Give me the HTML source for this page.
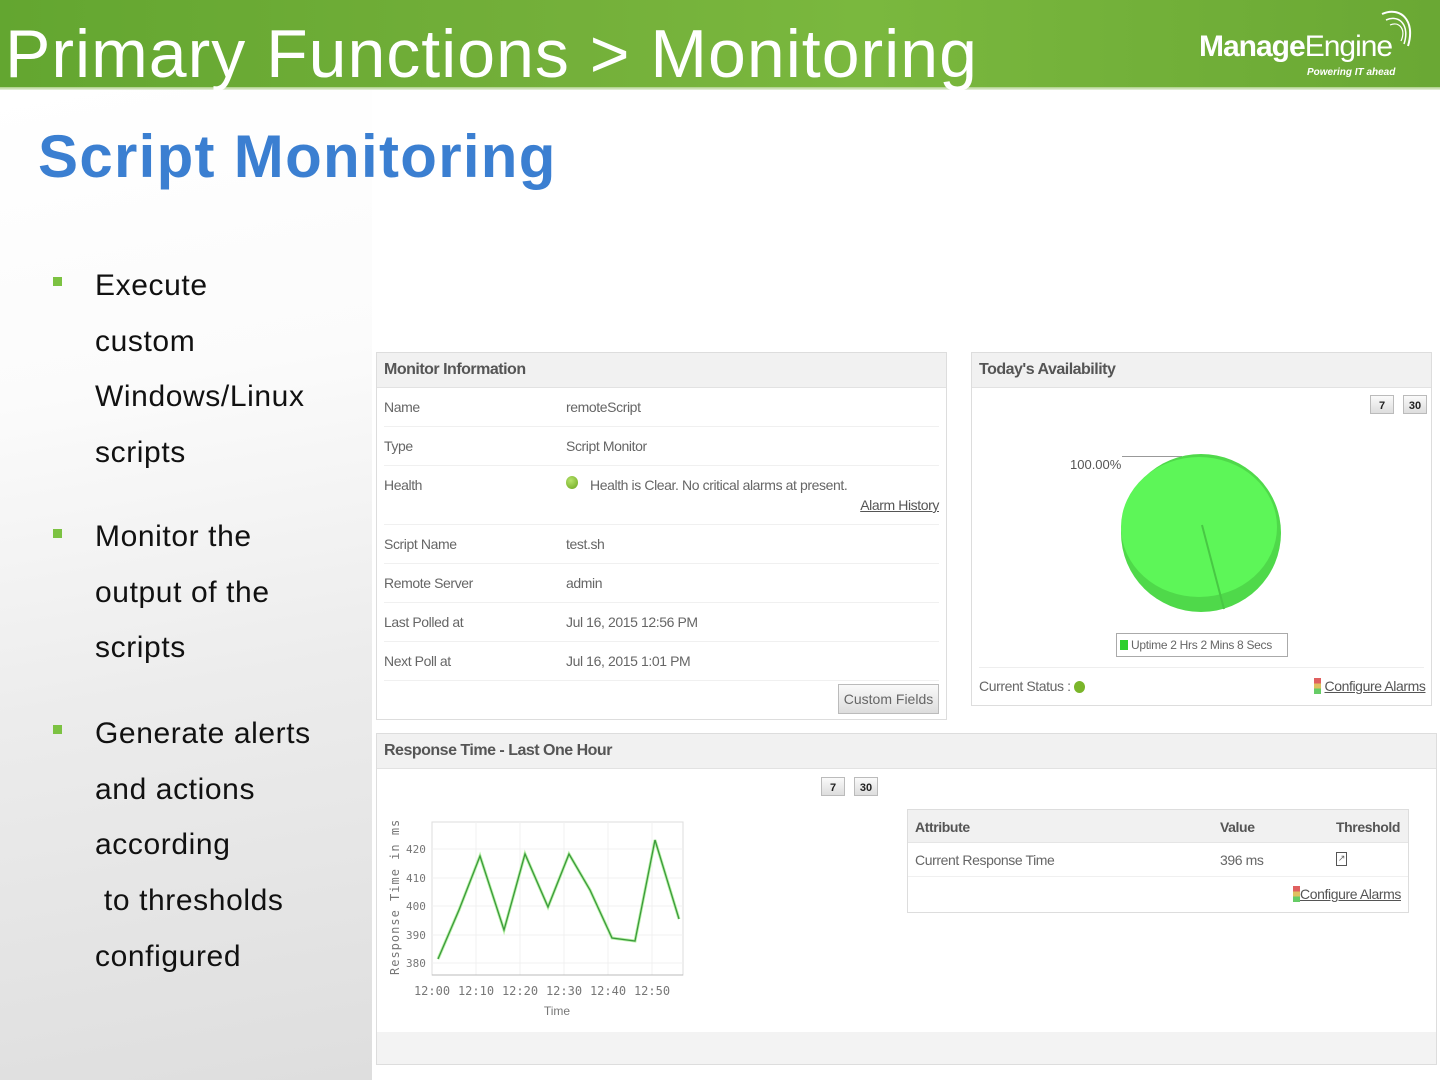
<!DOCTYPE html>
<html><head><meta charset="utf-8"><style>
*{margin:0;padding:0;box-sizing:border-box}
body{width:1440px;height:1080px;position:relative;overflow:hidden;font-family:"Liberation Sans",sans-serif;background:#fff}
.abs{position:absolute}
#hdr{left:0;top:0;width:1440px;height:88px;background:linear-gradient(90deg,#63a630 0%,#74b03a 40%,#7ab83e 60%,#6aa834 100%)}
#hdrline{left:0;top:87px;width:1440px;height:3px;background:linear-gradient(#a9cf83,#e9f2df)}
#left{left:0;top:90px;width:372px;height:990px;background:linear-gradient(170deg,#ffffff 0%,#fbfbfb 30%,#ececec 60%,#dedede 100%)}
.bul{left:53px;width:9px;height:9px;background:#7cc242}
.bt{left:95px;font-size:30px;color:#111;line-height:55.7px;white-space:pre;letter-spacing:0.6px}
.panel{border:1px solid #ddd;background:#fff}
.ph{background:#f1f1f1;height:35px;border-bottom:1px solid #e2e2e2;font-size:16px;color:#555;font-weight:bold;padding:8px 7px;letter-spacing:-0.5px;transform-origin:left}
.row{position:absolute;left:7px;right:7px;height:39px;border-bottom:1px solid #f0f0f0;font-size:14px;color:#666;letter-spacing:-0.4px}
.row span{position:absolute;top:11px}
.btn{border:1px solid #bbb;background:linear-gradient(#fafafa,#ddd);font-size:11px;font-weight:bold;color:#222;text-align:center;line-height:20px}
u{color:#555}
</style></head><body>
<div id="hdr" class="abs"></div>
<div id="hdrline" class="abs"></div>
<div class="abs" style="left:5px;top:14px;font-size:68px;color:#fff;letter-spacing:1px;line-height:80px;white-space:nowrap">Primary Functions &gt; Monitoring</div>
<div class="abs" style="left:1199px;top:30px;font-size:30px;color:#fff;letter-spacing:-1px;white-space:nowrap"><b>Manage</b>Engine</div>
<div class="abs" style="left:1307px;top:67px;font-size:10px;color:#fff;font-style:italic;font-weight:bold">Powering IT ahead</div>
<svg class="abs" style="left:1380px;top:6px" width="40" height="60"><path d="M2 8 C20 0 36 14 28 40" stroke="#fff" stroke-width="2" fill="none"/><path d="M6 14 C20 8 30 20 24 38" stroke="#fff" stroke-width="1.5" fill="none"/><path d="M10 19 C20 15 26 24 21 35" stroke="#fff" stroke-width="1.2" fill="none"/></svg>
<div id="left" class="abs"></div>
<div class="abs" style="left:38px;top:122px;font-size:60px;font-weight:bold;color:#3b7fd1;letter-spacing:1.3px;white-space:nowrap">Script Monitoring</div>

<div class="abs bul" style="top:277px"></div>
<div class="abs bt" style="top:258px">Execute
custom
Windows/Linux
scripts</div>
<div class="abs bul" style="top:529px"></div>
<div class="abs bt" style="top:509px">Monitor the
output of the
scripts</div>
<div class="abs bul" style="top:725px"></div>
<div class="abs bt" style="top:706px">Generate alerts
and actions
according
 to thresholds
configured</div>

<!-- Monitor information -->
<div class="abs panel" style="left:376px;top:352px;width:571px;height:368px">
<div class="ph">Monitor Information</div>
<div class="row" style="top:35px"><span style="left:0">Name</span><span style="left:182px">remoteScript</span></div>
<div class="row" style="top:74px"><span style="left:0">Type</span><span style="left:182px">Script Monitor</span></div>
<div class="row" style="top:113px;height:59px"><span style="left:0">Health</span><span style="left:182px;top:10px;width:12px;height:13px;border-radius:50%;background:radial-gradient(circle at 40% 35%,#b6e36a,#6aa51e)"></span><span style="left:206px">Health is Clear. No critical alarms at present.</span><span style="right:0;top:31px"><u>Alarm History</u></span></div>
<div class="row" style="top:172px"><span style="left:0">Script Name</span><span style="left:182px">test.sh</span></div>
<div class="row" style="top:211px"><span style="left:0">Remote Server</span><span style="left:182px">admin</span></div>
<div class="row" style="top:250px"><span style="left:0">Last Polled at</span><span style="left:182px">Jul 16, 2015 12:56 PM</span></div>
<div class="row" style="top:289px"><span style="left:0">Next Poll at</span><span style="left:182px">Jul 16, 2015 1:01 PM</span></div>
<div class="abs btn" style="left:461px;top:331px;width:101px;height:30px;line-height:28px;font-size:14px;font-weight:normal;color:#666">Custom Fields</div>
</div>

<!-- Availability -->
<div class="abs panel" style="left:971px;top:352px;width:461px;height:354px">
<div class="ph">Today's Availability</div>
<div class="abs btn" style="left:398px;top:42px;width:24px;height:19px">7</div>
<div class="abs btn" style="left:431px;top:42px;width:24px;height:19px">30</div>
<div class="abs" style="left:98px;top:104px;font-size:13px;color:#555">100.00%</div>
<div class="abs" style="left:150px;top:103px;width:60px;height:1px;background:#999"></div>
<svg class="abs" style="left:148px;top:98px" width="164" height="162"><ellipse cx="81" cy="82" rx="80" ry="79" fill="#4fd94a"/><ellipse cx="79" cy="76" rx="78" ry="70" fill="#5df658"/><path d="M82 74 L104 158" stroke="#48c844" stroke-width="2"/></svg>
<div class="abs" style="left:144px;top:280px;width:172px;height:24px;border:1px solid #aaa;font-size:12px;letter-spacing:-0.3px;color:#666;padding:4px 3px;white-space:nowrap;overflow:hidden"><span style="display:inline-block;width:8px;height:10px;background:#2ccf2c;vertical-align:-1px"></span> Uptime 2 Hrs 2 Mins 8 Secs</div>
<div class="abs" style="left:7px;top:314px;right:7px;height:1px;background:#eee"></div>
<div class="abs" style="left:7px;top:325px;font-size:14px;color:#666;letter-spacing:-0.4px">Current Status : <span style="display:inline-block;width:11px;height:12px;border-radius:50%;background:#7ab52a;vertical-align:-2px"></span></div>
<div class="abs" style="left:342px;top:325px;font-size:14px;letter-spacing:-0.4px"><span style="display:inline-block;width:7px;height:16px;background:linear-gradient(#e06060 33%,#e0c060 33% 66%,#6c6 66%);vertical-align:-3px"></span> <u>Configure Alarms</u></div>
</div>

<!-- Response time -->
<div class="abs panel" style="left:376px;top:733px;width:1061px;height:332px">
<div class="ph">Response Time - Last One Hour</div>
<div class="abs btn" style="left:444px;top:43px;width:24px;height:19px">7</div>
<div class="abs btn" style="left:477px;top:43px;width:24px;height:19px">30</div>
<div class="abs" style="left:0;right:0;bottom:0;height:32px;background:#f3f3f3"></div>
<div class="abs" style="left:530px;top:75px;width:502px;height:104px;border:1px solid #ddd">
 <div style="background:#f1f1f1;height:33px;border-bottom:1px solid #e5e5e5;font-size:14px;font-weight:bold;color:#555;position:relative;letter-spacing:-0.4px"><span class="abs" style="left:7px;top:9px">Attribute</span><span class="abs" style="left:312px;top:9px">Value</span><span class="abs" style="left:428px;top:9px">Threshold</span></div>
 <div style="height:34px;border-bottom:1px solid #f0f0f0;position:relative;font-size:14px;color:#666;letter-spacing:-0.4px"><span class="abs" style="left:7px;top:9px">Current Response Time</span><span class="abs" style="left:312px;top:9px">396 ms</span><span class="abs" style="left:428px;top:9px;width:11px;height:14px;border:1px solid #555;font-size:9px;line-height:11px;text-align:center">↗</span></div>
 <div class="abs" style="right:7px;top:76px;font-size:14px;letter-spacing:-0.4px"><span style="display:inline-block;width:7px;height:16px;background:linear-gradient(#e06060 33%,#e0c060 33% 66%,#6c6 66%);vertical-align:-3px"></span><u>Configure Alarms</u></div>
</div>
</div>

<svg class="abs" style="left:380px;top:810px" width="320" height="215" font-family="DejaVu Sans Mono, Liberation Mono, monospace" font-size="11" fill="#777">
<g transform="translate(-380,-810)">
<rect x="432" y="822" width="251" height="153" fill="none" stroke="#ddd"/>
<g stroke="#f0f0f0"><line x1="476" y1="822" x2="476" y2="975"/><line x1="520" y1="822" x2="520" y2="975"/><line x1="564" y1="822" x2="564" y2="975"/><line x1="608" y1="822" x2="608" y2="975"/><line x1="652" y1="822" x2="652" y2="975"/><line x1="432" y1="849" x2="683" y2="849"/><line x1="432" y1="878" x2="683" y2="878"/><line x1="432" y1="906" x2="683" y2="906"/><line x1="432" y1="935" x2="683" y2="935"/><line x1="432" y1="963" x2="683" y2="963"/></g>
<line x1="432" y1="975" x2="683" y2="975" stroke="#bbb"/>
<polyline points="438,959 459,910 480,856 504,930 525,854 548,907 569,854 590,890 612,938 635,941 655,840 679,919" fill="none" stroke="#b8f0a8" stroke-width="3"/>
<polyline points="438,959 459,910 480,856 504,930 525,854 548,907 569,854 590,890 612,938 635,941 655,840 679,919" fill="none" stroke="#3a9a3a" stroke-width="1.3"/>
<text x="406" y="853">420</text><text x="406" y="882">410</text><text x="406" y="910">400</text><text x="406" y="939">390</text><text x="406" y="967">380</text>
<g text-anchor="middle" font-size="12"><text x="432" y="995">12:00</text><text x="476" y="995">12:10</text><text x="520" y="995">12:20</text><text x="564" y="995">12:30</text><text x="608" y="995">12:40</text><text x="652" y="995">12:50</text><text x="557" y="1015" font-family="Liberation Sans">Time</text></g>
<text transform="translate(399,975) rotate(-90)" font-size="12" letter-spacing="1">Response Time in ms</text>
</g></svg>
</body></html>
